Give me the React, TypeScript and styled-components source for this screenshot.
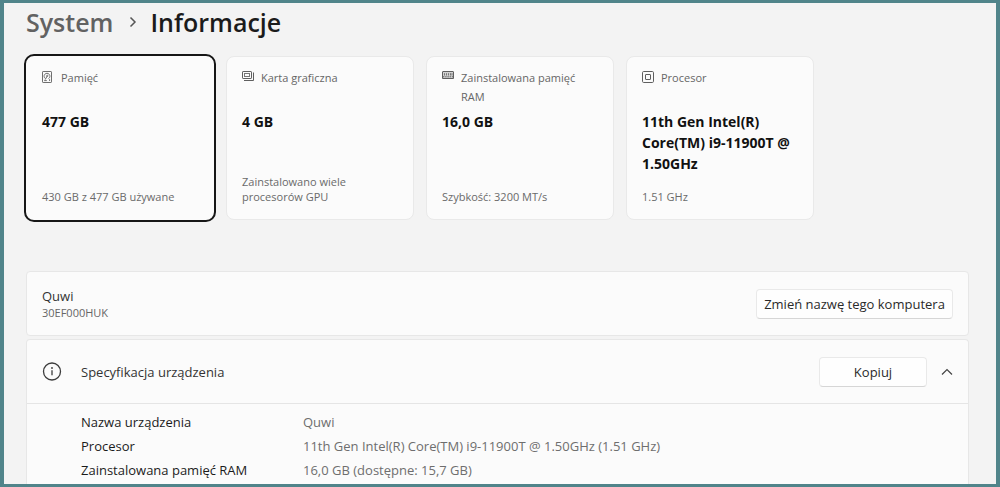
import React from "react";
import styled, { createGlobalStyle } from "styled-components";

const GlobalStyle = createGlobalStyle`
  *, *::before, *::after { box-sizing: border-box; }
  body {
    margin: 0;
    background: #f3f3f3;
    color: #1b1b1b;
    font-family: "Segoe UI", "Open Sans", "Noto Sans", sans-serif;
    font-size: 13px;
  }
  h1, h2, p, dl, dd { margin: 0; padding: 0; }
  button { font: inherit; color: inherit; }
`;

const Window = styled.main`
  display: flex;
  flex-direction: column;
  min-height: 100vh;
  padding: 0 27px 0 22px;
  border: solid #50848a;
  border-width: 3px 4px;
  background: #f3f3f3;
`;

const Breadcrumb = styled.nav`
  display: flex;
  align-items: center;
  height: 37px;
  font-size: 25px;
  font-weight: 600;
  line-height: 36px;
`;

const ParentLink = styled.a`
  color: #626262;
  text-decoration: none;
`;

const Separator = styled.svg`
  width: 8px;
  height: 12px;
  margin: 0 13px 0 16px;
`;

const PageTitle = styled.h1`
  font-size: inherit;
  font-weight: inherit;
`;

const Cards = styled.section`
  display: grid;
  grid-template-columns: repeat(4, minmax(0, 188px));
  gap: 12px;
  margin-top: 16px;
`;

const Card = styled.article<{ $selected?: boolean }>`
  display: flex;
  flex-direction: column;
  min-height: 164px;
  padding: 11px 15px 15px;
  border: 1px solid ${(p) => (p.$selected ? "#fbfbfb" : "#e9e9e9")};
  border-radius: 8px;
  outline: ${(p) => (p.$selected ? "2px solid #161616" : "none")};
  background: #fbfbfb;
`;

const CardHeader = styled.div`
  display: flex;
  gap: 7px;
  min-height: 40px;
  color: #666;
  font-size: 11px;
  line-height: 19px;
`;

const CardIcon = styled.svg`
  flex: none;
  width: 12px;
  height: 12px;
  margin-top: 3px;
`;

const CardValue = styled.p`
  margin-top: 3px;
  color: #111;
  font-size: 14px;
  font-weight: 700;
  line-height: 21px;
`;

const CardNote = styled.p`
  margin-top: auto;
  color: #6a6a6a;
  font-size: 11px;
  line-height: 15px;
`;

const Panel = styled.section<{ $fill?: boolean }>`
  flex: ${(p) => (p.$fill ? "1" : "none")};
  border: 1px solid #e7e7e7;
  border-bottom-width: ${(p) => (p.$fill ? "0" : "1px")};
  border-radius: ${(p) => (p.$fill ? "4px 4px 0 0" : "4px")};
  background: #fbfbfb;
`;

const Panels = styled.div`
  display: flex;
  flex: 1;
  flex-direction: column;
  gap: 3px;
  margin-top: 51px;
`;

const PanelRow = styled.div`
  display: flex;
  align-items: center;
  height: 63px;
  padding: 0 15px;
`;

const DeviceText = styled.div`
  flex: 1;
  color: #333;
  line-height: 18px;
`;

const DeviceModel = styled.p`
  color: #666;
  font-size: 11px;
  line-height: 15px;
`;

const InfoIcon = styled.svg`
  width: 20px;
  height: 20px;
  margin-right: 19px;
`;

const PanelTitle = styled.h2`
  flex: 1;
  color: #333;
  font-size: 13px;
  font-weight: 400;
`;

const Button = styled.button<{ $narrow?: boolean }>`
  width: ${(p) => (p.$narrow ? "108px" : "197px")};
  height: 30px;
  padding: 0;
  border: 1px solid #e9e9e9;
  border-bottom-color: #d6d6d6;
  border-radius: 4px;
  background: #fefefe;
  color: #2a2a2a;
`;

const CollapseButton = styled.button`
  display: flex;
  margin-left: 14px;
  padding: 0;
  border: 0;
  background: none;
`;

const Specs = styled.dl`
  display: grid;
  grid-template-columns: 222px 1fr;
  padding: 6px 15px 1px 54px;
  border-top: 1px solid #e5e5e5;
  line-height: 24px;
`;

const SpecValue = styled.dd`
  color: #6e6e6e;
`;

const StorageIcon = () => (
  <CardIcon viewBox="0 0 12 12" fill="none" stroke="#6f6f6f" aria-hidden="true">
    <rect x="0.5" y="0.5" width="9" height="11" rx="0.6" />
    <path d="M3.4 7.6A2.9 2.9 0 1 1 6.6 7.6M5.2 5L3.2 8.6" />
    <path d="M2.2 9.6h2.6M7.6 8.2v1.8" />
    <circle cx="5.3" cy="4.8" r="0.6" />
  </CardIcon>
);

const GraphicsIcon = () => (
  <CardIcon viewBox="0 0 12 12" fill="none" stroke="#5f5f5f" aria-hidden="true">
    <rect x="0.5" y="0.5" width="9" height="7" rx="0.6" />
    <rect x="2.5" y="2.5" width="5" height="3" stroke="#777" />
    <path d="M11.5 1.5v8H2" />
  </CardIcon>
);

const MemoryIcon = () => (
  <CardIcon viewBox="0 0 12 12" fill="none" stroke="#5f5f5f" aria-hidden="true">
    <path d="M1 0.5h10q.5 0 .5.5v6.5H.5V1q0-.5.5-.5z" fill="#d2d2d2" />
    <path d="M2.5 2.2v2.3M4.5 2.2v2.3M6.5 2.2v2.3M8.5 2.2v2.3M10 2.2v2.3" stroke="#777" />
    <path d="M1 5.8h10" strokeDasharray="1.4 0.8" />
  </CardIcon>
);

const ProcessorIcon = () => (
  <CardIcon viewBox="0 0 12 12" fill="none" stroke="#5f5f5f" aria-hidden="true">
    <rect x="0.5" y="0.5" width="11" height="11" rx="1.2" />
    <rect x="3.5" y="3.5" width="5" height="5" rx="0.4" />
  </CardIcon>
);

interface Summary {
  icon: React.ReactNode;
  label: string;
  value: string;
  note: string;
  selected?: boolean;
}

const summaries: Summary[] = [
  { icon: <StorageIcon />, label: "Pamięć", value: "477 GB", note: "430 GB z 477 GB używane", selected: true },
  { icon: <GraphicsIcon />, label: "Karta graficzna", value: "4 GB", note: "Zainstalowano wiele procesorów GPU" },
  { icon: <MemoryIcon />, label: "Zainstalowana pamięć RAM", value: "16,0 GB", note: "Szybkość: 3200 MT/s" },
  { icon: <ProcessorIcon />, label: "Procesor", value: "11th Gen Intel(R) Core(TM) i9-11900T @ 1.50GHz", note: "1.51 GHz" },
];

const specs = [
  ["Nazwa urządzenia", "Quwi"],
  ["Procesor", "11th Gen Intel(R) Core(TM) i9-11900T @ 1.50GHz (1.51 GHz)"],
  ["Zainstalowana pamięć RAM", "16,0 GB (dostępne: 15,7 GB)"],
];

export default function App() {
  return (
    <>
      <GlobalStyle />
      <Window>
        <Breadcrumb>
          <ParentLink href="#system">System</ParentLink>
          <Separator viewBox="0 0 8 12" fill="none" stroke="#555" strokeWidth="1.5" aria-hidden="true">
            <path d="M1.5 1.5L6 6l-4.5 4.5" />
          </Separator>
          <PageTitle>Informacje</PageTitle>
        </Breadcrumb>

        <Cards>
          {summaries.map((s) => (
            <Card key={s.label} $selected={s.selected}>
              <CardHeader>
                {s.icon}
                <span>{s.label}</span>
              </CardHeader>
              <CardValue>{s.value}</CardValue>
              <CardNote>{s.note}</CardNote>
            </Card>
          ))}
        </Cards>

        <Panels>
          <Panel>
            <PanelRow>
              <DeviceText>
                <p>Quwi</p>
                <DeviceModel>30EF000HUK</DeviceModel>
              </DeviceText>
              <Button type="button">Zmień nazwę tego komputera</Button>
            </PanelRow>
          </Panel>

          <Panel $fill>
            <PanelRow>
              <InfoIcon viewBox="0 0 20 20" fill="none" stroke="#3c3c3c" strokeWidth="1.3" aria-hidden="true">
                <circle cx="10" cy="9.5" r="8.5" />
                <path d="M10 8.3v5" />
                <circle cx="10" cy="6" r="0.9" fill="#3c3c3c" stroke="none" />
              </InfoIcon>
              <PanelTitle>Specyfikacja urządzenia</PanelTitle>
              <Button type="button" $narrow>Kopiuj</Button>
              <CollapseButton type="button" aria-label="Zwiń" aria-expanded="true">
                <svg width="12" height="8" viewBox="0 0 12 8" fill="none" stroke="#444" strokeWidth="1.2">
                  <path d="M1 6.5l5-5 5 5" />
                </svg>
              </CollapseButton>
            </PanelRow>
            <Specs>
              {specs.map(([name, value]) => (
                <React.Fragment key={name}>
                  <dt>{name}</dt>
                  <SpecValue>{value}</SpecValue>
                </React.Fragment>
              ))}
            </Specs>
          </Panel>
        </Panels>
      </Window>
    </>
  );
}
